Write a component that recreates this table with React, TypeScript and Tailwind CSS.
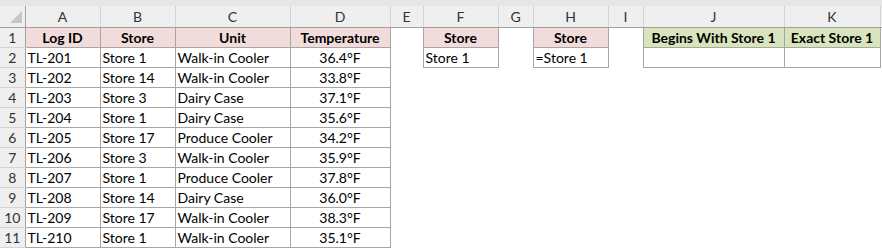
import React from "react";

const cols = ["A", "B", "C", "D", "E", "F", "G", "H", "I", "J", "K"];
const widths = [25, 75, 75, 115, 100, 33, 75, 35, 75, 35, 141, 96, 2];

const data: [string, string, string, string][] = [
  ["TL-201", "Store 1", "Walk-in Cooler", "36.4°F"],
  ["TL-202", "Store 14", "Walk-in Cooler", "33.8°F"],
  ["TL-203", "Store 3", "Dairy Case", "37.1°F"],
  ["TL-204", "Store 1", "Dairy Case", "35.6°F"],
  ["TL-205", "Store 17", "Produce Cooler", "34.2°F"],
  ["TL-206", "Store 3", "Walk-in Cooler", "35.9°F"],
  ["TL-207", "Store 1", "Produce Cooler", "37.8°F"],
  ["TL-208", "Store 14", "Dairy Case", "36.0°F"],
  ["TL-209", "Store 17", "Walk-in Cooler", "38.3°F"],
  ["TL-210", "Store 1", "Walk-in Cooler", "35.1°F"],
];

const cell = "border border-[#a6a6a6] px-[2px] pt-[1px] whitespace-nowrap overflow-hidden";
const pink = "bg-[#f2dcdb] font-bold text-center";
const green = "bg-[#d8e4bc] font-bold text-center";
const rowHdr =
  "bg-[#efefef] text-[#333] text-center border-r border-r-[#a0a0a0] border-b border-b-[#d4d4d4] p-0 pt-[1px]";

export default function App() {
  return (
    <div
      className="w-[882px] h-[248px] bg-white overflow-hidden text-[14px] leading-none text-black"
      style={{ fontFamily: "Lato, 'Liberation Sans', sans-serif" }}
    >
      <div className="h-[6px] bg-[#e6e6e6]" />
      <table className="table-fixed border-collapse w-[882px]">
        <colgroup>
          {widths.map((w, i) => (
            <col key={i} style={{ width: w }} />
          ))}
        </colgroup>
        <thead>
          <tr className="h-[21px]">
            <th className="bg-[#efefef] border-r border-r-[#a0a0a0] border-b border-b-[#a0a0a0] p-0">
              <div className="flex h-[20px] items-end justify-end pr-[3px] pb-[3px]">
                <svg width="12" height="12" viewBox="0 0 12 12">
                  <polygon points="12,0 12,12 0,12" fill="#c6c6c6" />
                </svg>
              </div>
            </th>
            {cols.map((c) => (
              <th
                key={c}
                className="bg-[#efefef] font-normal text-[#333] text-center border-r border-r-[#d4d4d4] border-b border-b-[#a0a0a0] p-0 pt-[1px]"
              >
                {c}
              </th>
            ))}
            <th className="bg-[#efefef] border-b border-b-[#a0a0a0] p-0" />
          </tr>
        </thead>
        <tbody>
          <tr className="h-[20px]">
            <td className={rowHdr}>1</td>
            <td className={`${cell} ${pink}`}>Log ID</td>
            <td className={`${cell} ${pink}`}>Store</td>
            <td className={`${cell} ${pink}`}>Unit</td>
            <td className={`${cell} ${pink}`}>Temperature</td>
            <td />
            <td className={`${cell} ${pink}`}>Store</td>
            <td />
            <td className={`${cell} ${pink}`}>Store</td>
            <td />
            <td className={`${cell} ${green}`}>Begins With Store 1</td>
            <td className={`${cell} ${green}`}>Exact Store 1</td>
            <td />
          </tr>
          {data.map((r, i) => (
            <tr key={i} className="h-[20px]">
              <td className={rowHdr}>{i + 2}</td>
              <td className={cell}>{r[0]}</td>
              <td className={cell}>{r[1]}</td>
              <td className={cell}>{r[2]}</td>
              <td className={`${cell} text-center`}>{r[3]}</td>
              <td />
              {i === 0 ? (
                <>
                  <td className={cell}>Store 1</td>
                  <td />
                  <td className={cell}>=Store 1</td>
                  <td />
                  <td className={cell} />
                  <td className={cell} />
                </>
              ) : (
                <>
                  <td />
                  <td />
                  <td />
                  <td />
                  <td />
                  <td />
                </>
              )}
              <td />
            </tr>
          ))}
        </tbody>
      </table>
    </div>
  );
}
